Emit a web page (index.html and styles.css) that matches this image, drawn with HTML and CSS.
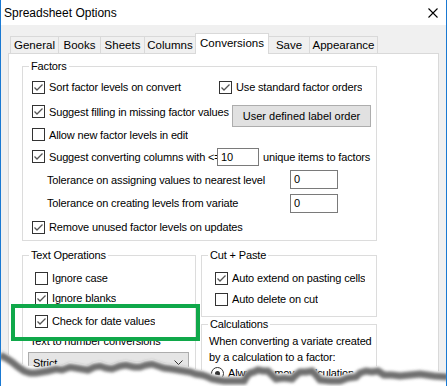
FILE: index.html
```html
<!DOCTYPE html>
<html lang="en">
<head>
    <meta charset="UTF-8">
    <title>Spreadsheet Options</title>
    <link rel="stylesheet" href="styles.css">
</head>
<body>

<div class="window">
    <div class="titlebar">
        <span class="title">Spreadsheet Options</span>
        <svg class="close" width="10" height="10" viewBox="0 0 10 10">
            <path d="M0.5 0.5 L9.5 9.5 M9.5 0.5 L0.5 9.5" stroke="#000" stroke-width="1.1" fill="none"/>
        </svg>
    </div>

    <div class="client">
        <div class="tabs">
            <div class="tab">General</div>
            <div class="tab">Books</div>
            <div class="tab">Sheets</div>
            <div class="tab">Columns</div>
            <div class="tab active">Conversions</div>
            <div class="tab">Save</div>
            <div class="tab">Appearance</div>
        </div>

        <div class="panel">
            <!-- Factors -->
            <div class="group factors">
                <span class="group-title">Factors</span>
                <div class="rows">
                    <div class="row">
                        <label class="check col-a"><span class="box checked"><svg width="11" height="11" viewBox="0 0 11 11"><path d="M1.5 5.5 L4 8 L9.5 2.5"/></svg></span>Sort factor levels on convert</label>
                        <label class="check"><span class="box checked"><svg width="11" height="11" viewBox="0 0 11 11"><path d="M1.5 5.5 L4 8 L9.5 2.5"/></svg></span>Use standard factor orders</label>
                    </div>
                    <div class="row">
                        <label class="check col-wide"><span class="box checked"><svg width="11" height="11" viewBox="0 0 11 11"><path d="M1.5 5.5 L4 8 L9.5 2.5"/></svg></span>Suggest filling in missing factor values</label>
                        <div class="btn">User defined label order</div>
                    </div>
                    <div class="row">
                        <label class="check"><span class="box"></span>Allow new factor levels in edit</label>
                    </div>
                    <div class="row">
                        <label class="check col-conv"><span class="box checked"><svg width="11" height="11" viewBox="0 0 11 11"><path d="M1.5 5.5 L4 8 L9.5 2.5"/></svg></span>Suggest converting columns with &lt;=</label>
                        <div class="num">10</div>
                        <span class="after-num">unique items to factors</span>
                    </div>
                    <div class="row">
                        <span class="tol-label">Tolerance on assigning values to nearest level</span>
                        <div class="num tol">0</div>
                    </div>
                    <div class="row">
                        <span class="tol-label">Tolerance on creating levels from variate</span>
                        <div class="num tol">0</div>
                    </div>
                    <div class="row">
                        <label class="check"><span class="box checked"><svg width="11" height="11" viewBox="0 0 11 11"><path d="M1.5 5.5 L4 8 L9.5 2.5"/></svg></span>Remove unused factor levels on updates</label>
                    </div>
                </div>
            </div>

            <div class="lower">
                <!-- Text Operations -->
                <div class="group textops">
                    <span class="group-title">Text Operations</span>
                    <div class="rows">
                        <div class="row">
                            <label class="check"><span class="box"></span>Ignore case</label>
                        </div>
                        <div class="row">
                            <label class="check"><span class="box checked"><svg width="11" height="11" viewBox="0 0 11 11"><path d="M1.5 5.5 L4 8 L9.5 2.5"/></svg></span>Ignore blanks</label>
                        </div>
                        <div class="row">
                            <label class="check"><span class="box checked"><svg width="11" height="11" viewBox="0 0 11 11"><path d="M1.5 5.5 L4 8 L9.5 2.5"/></svg></span>Check for date values</label>
                        </div>
                    </div>
                    <div class="subhead">Text to number conversions</div>
                    <div class="select">
                        <span>Strict</span>
                        <svg width="9" height="5" viewBox="0 0 9 5"><path d="M0.5 0.5 L4.5 4.5 L8.5 0.5" stroke="#333" fill="none"/></svg>
                    </div>
                </div>

                <div class="side">
                    <!-- Cut + Paste -->
                    <div class="group cutpaste">
                        <span class="group-title">Cut + Paste</span>
                        <div class="rows">
                            <div class="row">
                                <label class="check"><span class="box checked"><svg width="11" height="11" viewBox="0 0 11 11"><path d="M1.5 5.5 L4 8 L9.5 2.5"/></svg></span>Auto extend on pasting cells</label>
                            </div>
                            <div class="row">
                                <label class="check"><span class="box"></span>Auto delete on cut</label>
                            </div>
                        </div>
                    </div>

                    <!-- Calculations -->
                    <div class="group calc">
                        <span class="group-title">Calculations</span>
                        <div class="calc-text">
                            <div>When converting a variate created</div>
                            <div>by a calculation to a factor:</div>
                        </div>
                        <label class="radio-row"><span class="radio"><span class="dot"></span></span>Always remove calculation</label>
                    </div>
                </div>
            </div>
        </div>
    </div>

    <!-- annotation -->
    <div class="highlight"></div>

    <!-- torn paper edge -->
    <svg class="torn" width="448" height="60" viewBox="0 0 448 60">
        <defs>
            <filter id="soft" x="-5%" y="-50%" width="110%" height="200%">
                <feGaussianBlur stdDeviation="1.4"/>
            </filter>
        </defs>
        <polygon class="paper" points="0,24 6,27 12,31 18,35 24,39 30,40 36,41 48,40 56,38 62,39 70,36 76,37 88,39 94,36 100,35 106,37 112,38 120,35 126,34 134,36 140,36 146,34 152,33 158,35 164,37 172,38 178,39 190,41 196,43 202,44 208,46 212,48 218,49 224,51 234,50 244,50 247,45 250,42 254,40 258,38 263,40 268,40 272,44 276,48 284,47 292,48 296,44 300,40 306,41 312,40 316,44 320,49 330,50 340,50 348,47 356,46 360,42 366,40 372,41 378,40 384,44 392,44 400,45 410,44 420,43 434,45 448,46 448,60 0,60"/>
        <polyline class="shadow" points="0,29 6,32 12,36 18,41 24,45 30,47 36,47 48,45 56,43 62,44 70,41 76,42 88,44 94,41 100,40 106,42 112,43 120,40 126,39 134,41 140,41 146,39 152,38 158,40 164,42 172,43 178,44 190,46 196,48 202,49 208,51 212,53 218,54 224,55 234,55 244,55 247,50 250,47 254,46 258,44 263,45 268,45 272,49 276,53 284,52 292,53 296,49 300,46 306,46 312,45 316,49 320,54 330,55 340,55 348,52 356,51 360,47 366,45 372,46 378,45 384,49 392,49 400,50 410,49 420,48 434,50 448,51"/>
    </svg>
</div>

</body>
</html>
```

FILE: styles.css
```css
* {
    box-sizing: border-box;
}
body {
    margin: 0;
    width: 448px;
    height: 386px;
    overflow: hidden;
    background-color: #fff;
    font-family: "Liberation Sans", Arial, sans-serif;
    font-size: 11px;
    color: #000;
}
.window {
    position: relative;
    width: 447px;
    height: 386px;
    overflow: hidden;
    border-left: 1px solid #1a79d2;
    border-right: 1px solid #1a79d2;
    background-color: #f0f0f0;
}
.titlebar {
    height: 25px;
    background-color: #fff;
    display: flex;
    align-items: center;
    justify-content: space-between;
    padding: 0 8px 0 3px;
}
.title {
    font-size: 12px;
}
.close {
    display: block;
}
.client {
    padding: 8px 7px 0 7px;
}

/* tabs */
.tabs {
    display: flex;
    align-items: flex-end;
    height: 20px;
    padding-left: 2px;
}
.tab {
    height: 17px;
    line-height: 16px;
    font-size: 11.5px;
    text-align: center;
    border: 1px solid #d9d9d9;
    border-bottom: none;
    background-color: #f0f0f0;
    margin-left: -1px;
}
.tab:nth-child(1) { width: 49px; margin-left: 0; }
.tab:nth-child(2) { width: 43px; }
.tab:nth-child(3) { width: 45px; }
.tab:nth-child(4) { width: 52px; }
.tab:nth-child(5) { width: 74px; }
.tab:nth-child(6) { width: 42px; }
.tab:nth-child(7) { width: 69px; }
.tab.active {
    position: relative;
    z-index: 1;
    height: 21px;
    line-height: 19px;
    margin-bottom: -1px;
    background-color: #fff;
}
.panel {
    width: 431px;
    height: 400px;
    background-color: #fff;
    border: 1px solid #d9d9d9;
    padding: 12px 0 0 13px;
    letter-spacing: -0.15px;
}

/* group boxes */
.group {
    border: 1px solid #dcdcdc;
}
.group-title {
    display: block;
    width: max-content;
    height: 13px;
    line-height: 13px;
    margin: -7px 0 0 6px;
    padding: 0 2px;
    background-color: #fff;
}
.row {
    display: flex;
    align-items: center;
    height: 20px;
}
.check {
    display: flex;
    align-items: center;
    gap: 4px;
    white-space: nowrap;
    overflow: hidden;
}
.box {
    flex: none;
    width: 13px;
    height: 13px;
    border: 1px solid #333;
    background-color: #fff;
}
.box svg {
    display: block;
}
.box path {
    fill: none;
    stroke: #555;
    stroke-width: 1.3;
}

/* factors */
.factors {
    width: 355px;
}
.factors .rows {
    padding: 2px 0 1px 9px;
}
.factors .row:nth-child(1) { height: 24px; }
.factors .row:nth-child(2) { height: 25px; }
.factors .row:nth-child(3) { height: 21px; }
.factors .row:nth-child(4) { height: 23px; }
.factors .row:nth-child(5) { height: 23px; }
.factors .row:nth-child(6) { height: 24px; }
.factors .row:nth-child(7) { height: 24px; }
.col-a {
    width: 187px;
}
.col-wide {
    width: 200px;
}
.col-conv {
    width: 185px;
}
.btn {
    align-self: flex-start;
    margin-top: 6px;
    width: 139px;
    height: 22px;
    line-height: 20px;
    text-align: center;
    letter-spacing: 0;
    background-color: #e1e1e1;
    border: 1px solid #adadad;
}
.num {
    width: 42px;
    height: 18px;
    line-height: 16px;
    padding-left: 3px;
    border: 1px solid #7a7a7a;
    background-color: #fff;
}
.num.tol {
    width: 48px;
    height: 19px;
    line-height: 17px;
}
.after-num {
    margin-left: 4px;
}
.tol-label {
    width: 243px;
    margin-left: 15px;
}

/* lower part */
.lower {
    display: flex;
    gap: 5px;
    margin-top: 14px;
}
.textops {
    width: 174px;
    height: 140px;
}
.textops .rows {
    padding: 6px 0 0 12px;
}
.textops .row:nth-child(3) {
    margin-top: 3px;
}
.subhead {
    height: 20px;
    line-height: 20px;
    padding-left: 7px;
    white-space: nowrap;
}
.select {
    display: flex;
    align-items: center;
    justify-content: space-between;
    width: 161px;
    height: 21px;
    margin: 1px 0 0 5px;
    padding: 0 5px 0 4px;
    background-color: #e5e5e5;
    border: 1px solid #adadad;
}
.side {
    width: 176px;
    display: flex;
    flex-direction: column;
    gap: 7px;
}
.cutpaste .rows {
    padding: 6px 0 7px 13px;
}
.cutpaste .row:nth-child(2) {
    margin-top: 1px;
}
.calc {
    height: 80px;
}
.calc-text {
    padding: 2px 0 0 7px;
    line-height: 16px;
    white-space: nowrap;
}
.radio-row {
    display: flex;
    align-items: center;
    gap: 4px;
    height: 16px;
    padding-left: 9px;
}
.radio {
    width: 13px;
    height: 13px;
    border: 1px solid #333;
    border-radius: 50%;
    display: flex;
    align-items: center;
    justify-content: center;
}
.dot {
    width: 5px;
    height: 5px;
    border-radius: 50%;
    background-color: #333;
}

/* annotation box and torn edge */
.highlight {
    position: absolute;
    left: 10px;
    top: 304px;
    width: 189px;
    height: 37px;
    border: 4px solid #10a84a;
}
.torn {
    position: absolute;
    left: -1px;
    top: 326px;
    display: block;
}
.paper {
    fill: #fff;
}
.shadow {
    fill: none;
    stroke: #6f6f6f;
    stroke-width: 7;
    filter: url(#soft);
}
```
